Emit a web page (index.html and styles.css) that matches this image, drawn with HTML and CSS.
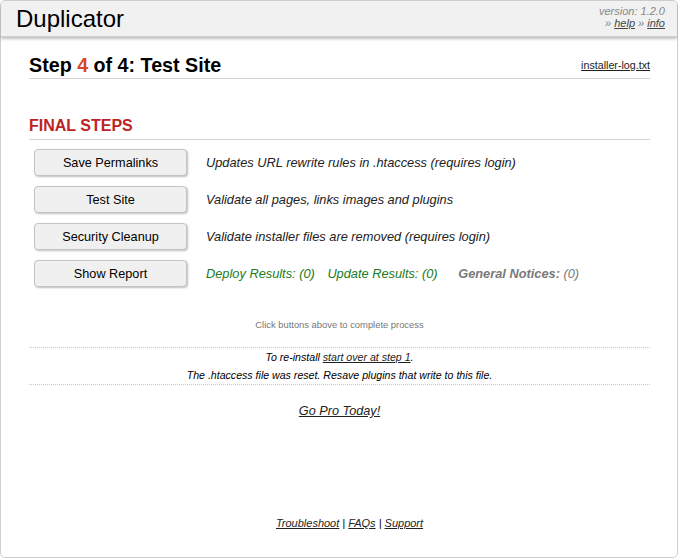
FILE: index.html
```html
<!DOCTYPE html>
<html lang="en">
<head>
  <meta charset="UTF-8">
  <meta name="viewport" content="width=device-width, initial-scale=1">
  <title>Duplicator - Step 4</title>
  <link rel="stylesheet" href="styles.css">
</head>
<body>

  <div class="wrap">

    <div class="hdr">
      <div class="hdr-title">Duplicator</div>
      <div class="hdr-ver">
        version: 1.2.0<br>
        &raquo; <a href="#">help</a> &raquo; <a href="#">info</a>
      </div>
    </div>

    <div class="main">

      <div class="step-head">
        <div class="step-title">Step <span class="step-num">4</span> of 4: Test Site</div>
        <a class="log-link" href="#">installer-log.txt</a>
      </div>

      <div class="section-title">FINAL STEPS</div>

      <div class="actions">
        <button class="btn">Save Permalinks</button>
        <div class="desc">Updates URL rewrite rules in .htaccess (requires login)</div>

        <button class="btn">Test Site</button>
        <div class="desc">Validate all pages, links images and plugins</div>

        <button class="btn">Security Cleanup</button>
        <div class="desc">Validate installer files are removed (requires login)</div>

        <button class="btn">Show Report</button>
        <div class="desc">
          <span class="res res-deploy">Deploy Results: (0)</span>
          <span class="res res-update">Update Results: (0)</span>
          <span class="res res-notice"><b>General Notices:</b> (0)</span>
        </div>
      </div>

      <div class="note">Click buttons above to complete process</div>

      <div class="reinstall">
        To re-install <a href="#">start over at step 1</a>.<br>
        The .htaccess file was reset. Resave plugins that write to this file.
      </div>

      <div class="gopro"><a href="#">Go Pro Today!</a></div>

      <div class="footer">
        <a href="#">Troubleshoot</a> | <a href="#">FAQs</a> | <a href="#">Support</a>
      </div>

    </div>
  </div>

</body>
</html>
```

FILE: styles.css
```css
body {
  margin: 0;
  font-family: "Liberation Sans", Arial, sans-serif;
  color: #000;
  background: #fff;
}
a {
  color: #222;
}
.wrap {
  min-height: 100vh;
  box-sizing: border-box;
  border: 1px solid #cfcfcf;
  border-radius: 5px;
}
.hdr {
  display: flex;
  justify-content: space-between;
  align-items: flex-start;
  height: 36px;
  box-sizing: border-box;
  padding: 4px 12px 0 15px;
  background: #f1f1f1;
  border-bottom: 1px solid #d0d0d0;
  border-radius: 5px 5px 0 0;
  box-shadow: 0 2px 3px rgba(0,0,0,0.25);
}
.hdr-title {
  font-size: 24px;
  color: #000;
}
.hdr-ver {
  font-size: 11px;
  line-height: 12px;
  font-style: italic;
  color: #888;
  text-align: right;
}
.hdr-ver a {
  color: #444;
}
.main {
  padding: 0 27px 0 28px;
}
.step-head {
  display: flex;
  justify-content: space-between;
  align-items: center;
  margin-top: 16px;
  padding-bottom: 1px;
  border-bottom: 1px solid #d3d3d3;
}
.step-title {
  font-size: 19.7px;
  line-height: 24px;
  font-weight: bold;
}
.step-num {
  color: #d9472b;
}
.log-link {
  font-size: 10.7px;
  color: #222;
}
.section-title {
  margin-top: 38px;
  padding-bottom: 4px;
  font-size: 16px;
  line-height: 18px;
  font-weight: bold;
  color: #be2323;
  border-bottom: 1px solid #d3d3d3;
}
.actions {
  display: grid;
  grid-template-columns: 153px 1fr;
  column-gap: 19px;
  row-gap: 10px;
  align-items: center;
  margin-top: 9px;
  padding-left: 5px;
}
.btn {
  height: 27px;
  box-sizing: border-box;
  padding: 0;
  font-family: "Liberation Sans", Arial, sans-serif;
  font-size: 12.7px;
  color: #000;
  background: #f0f0f0;
  border: 1px solid #c4c4c4;
  border-radius: 4px;
  box-shadow: 1px 1px 2px rgba(0,0,0,0.25);
  cursor: pointer;
}
.desc {
  font-size: 12.8px;
  font-style: italic;
  color: #222;
}
.res-deploy,
.res-update {
  color: #1b7a1b;
}
.res-deploy {
  margin-right: 9px;
}
.res-update {
  margin-right: 17px;
}
.res-notice {
  color: #7a7a7a;
}
.note {
  margin-top: 32px;
  font-size: 9.4px;
  line-height: 12px;
  color: #777;
  text-align: center;
}
.reinstall {
  margin-top: 16px;
  border-top: 1px dotted #c8c8c8;
  border-bottom: 1px dotted #c8c8c8;
  font-size: 10.6px;
  line-height: 18px;
  font-style: italic;
  text-align: center;
}
.gopro {
  margin-top: 17px;
  font-size: 12.7px;
  line-height: 18px;
  font-style: italic;
  text-align: center;
}
.footer {
  margin-top: 96px;
  padding-left: 20px;
  font-size: 11px;
  line-height: 14px;
  font-style: italic;
  text-align: center;
}
```
